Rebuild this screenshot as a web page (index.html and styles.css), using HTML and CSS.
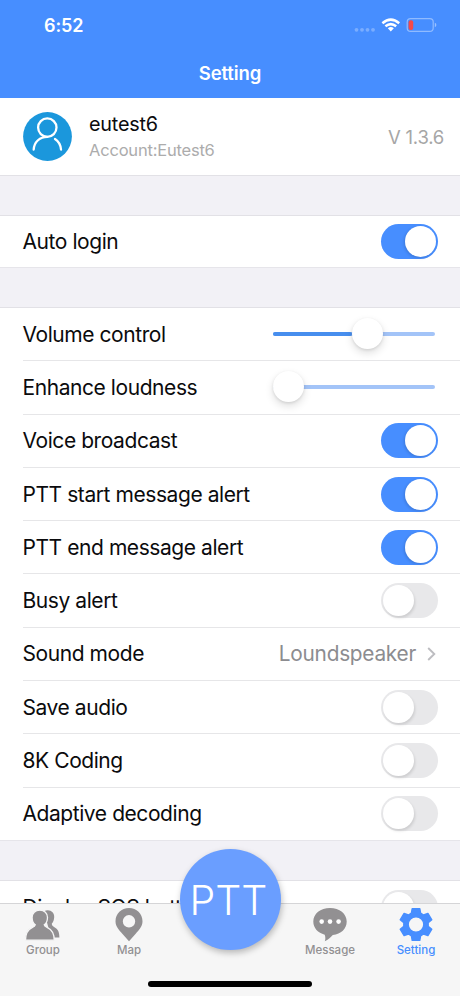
FILE: index.html
```html
<!DOCTYPE html>
<html lang="en">

<head>
  <meta charset="UTF-8">
  <meta name="viewport" content="width=device-width, initial-scale=1.0">
  <title>Setting</title>
  <link rel="stylesheet" href="styles.css">
</head>

<body>
  <div class="screen">
    <header class="header">
      <div class="status">
        <span class="time">6:52</span>
        <svg class="status-icons" width="84" height="18" viewBox="0 0 84 18">
          <g fill="#fff" opacity=".28">
            <circle cx="3.5" cy="13.8" r="1.9"/>
            <circle cx="9" cy="13.8" r="1.9"/>
            <circle cx="14.5" cy="13.8" r="1.9"/>
            <circle cx="20" cy="13.8" r="1.9"/>
          </g>
          <g fill="none" stroke="#fff" stroke-width="2.5">
            <path d="M29.4 7.2Q37.8 .1 46.2 7.2"/>
            <path d="M32.4 10.3Q37.8 5.9 43.2 10.3"/>
          </g>
          <path fill="#fff" d="M34.8 12.3Q37.8 9.9 40.8 12.3L37.8 15.6Z"/>
          <rect x="54.2" y="2.7" width="26" height="12.6" rx="3.4" fill="none" stroke="#fff" stroke-width="1.2" opacity=".4"/>
          <path fill="#fff" opacity=".45" d="M81.8 6.8Q83.4 7.4 83.4 9T81.8 11.2Z"/>
          <rect x="55.6" y="4.2" width="4.6" height="9.8" rx="2" fill="#f4494a"/>
        </svg>
      </div>
      <h1 class="title">Setting</h1>
    </header>

    <section class="profile">
      <svg class="avatar" width="49" height="49" viewBox="0 0 49 49">
        <circle cx="24.5" cy="24.5" r="24.4" fill="#1b97dc"/>
        <g fill="none" stroke="#fff" stroke-width="2.3" stroke-linecap="round">
          <circle cx="24.3" cy="15.6" r="9.2"/>
          <path d="M10.7 37.5C11.2 29.8 17 24.8 24.3 24.8"/>
          <path d="M32 27C35.5 29.3 37.6 33 38 37.5"/>
        </g>
      </svg>
      <div class="user">
        <div class="name">eutest6</div>
        <div class="account">Account:Eutest6</div>
      </div>
      <div class="version">V 1.3.6</div>
    </section>

    <section class="group login">
      <div class="row"><span class="label">Auto login</span><i class="switch on"></i></div>
    </section>

    <section class="group">
      <div class="row"><span class="label">Volume control</span><div class="slider"><i class="fill"></i><i class="knob"></i></div></div>
      <div class="row"><span class="label">Enhance loudness</span><div class="slider"><i class="knob"></i></div></div>
      <div class="row"><span class="label">Voice broadcast</span><i class="switch on"></i></div>
      <div class="row"><span class="label">PTT start message alert</span><i class="switch on"></i></div>
      <div class="row"><span class="label">PTT end message alert</span><i class="switch on"></i></div>
      <div class="row"><span class="label">Busy alert</span><i class="switch"></i></div>
      <div class="row">
        <span class="label">Sound mode</span>
        <span class="value">Loundspeaker</span>
        <svg class="chevron" width="9" height="14" viewBox="0 0 9 14"><path d="M1.2 1L7.3 7L1.2 13" fill="none" stroke="#bdbdc1" stroke-width="1.9"/></svg>
      </div>
      <div class="row"><span class="label">Save audio</span><i class="switch"></i></div>
      <div class="row"><span class="label">8K Coding</span><i class="switch"></i></div>
      <div class="row"><span class="label">Adaptive decoding</span><i class="switch"></i></div>
    </section>

    <section class="group">
      <div class="row"><span class="label">Display SOS button</span><i class="switch"></i></div>
    </section>

    <nav class="tabbar">
      <a class="tab">
        <svg width="36" height="36" viewBox="0 0 36 36" fill="#929092">
          <path d="M19 4.2C24.5 1.6 29.6 4.9 29.2 10.3C29 13.2 28.2 15.2 26.8 16.6C26.8 18.4 27.6 19.2 29.8 20.4C33 22.2 34.3 24.5 34.4 30.6H26Z"/>
          <path stroke="#f6f6f6" stroke-width="1.3" d="M14.8 3.2C10.3 3.2 7 6.3 7.1 10.7C7.2 13.8 8.4 16.4 10.3 17.8C10.2 19.2 9.1 19.8 7.1 20.6C2.6 22.6.6 26 .5 33.2H29.3C29.1 26 26.8 22.5 22.4 20.6C20.4 19.8 19.3 19.2 19.2 17.8C21.2 16.4 22.4 13.8 22.5 10.7C22.6 6.3 19.3 3.2 14.8 3.2Z"/>
        </svg>
        <span>Group</span>
      </a>
      <a class="tab">
        <svg width="36" height="36" viewBox="0 0 36 36"><path fill="#929092" fill-rule="evenodd" d="M18 1C10.4 1 4.5 6.8 4.5 14.2C4.5 19.5 8 22.8 11.3 26.7L18 34.3L24.7 26.7C28 22.8 31.5 19.5 31.5 14.2C31.5 6.8 25.6 1 18 1ZM18 8.1A6.2 6.2 0 1 1 18 20.5A6.2 6.2 0 1 1 18 8.1Z"/></svg>
        <span>Map</span>
      </a>
      <a class="tab tab-message">
        <svg width="36" height="36" viewBox="0 0 36 36">
          <path fill="#929092" d="M18 1C8.5 1 1.3 6.7 1.3 14.6C1.3 21.2 6 26 12.7 27.7C13.6 30 13.5 32.5 12.8 34.3C16.2 32.7 18.5 30.7 20.8 28.1C29 27.2 34.7 22 34.7 14.6C34.7 6.7 27.5 1 18 1Z"/>
          <g fill="#fff"><circle cx="9.7" cy="14.6" r="2.3"/><circle cx="18" cy="14.6" r="2.3"/><circle cx="26.6" cy="14.6" r="2.3"/></g>
        </svg>
        <span>Message</span>
      </a>
      <a class="tab active">
        <svg width="36" height="36" viewBox="0 0 36 36">
          <path fill="#478eff" stroke="#478eff" stroke-width="1.4" stroke-linejoin="round" fill-rule="evenodd" d="M14.2 1.7H21.8L22.6 6.2L25.6 8L29.9 6.4L33.8 12.8L30.2 15.6V19.4L33.8 22.2L29.9 28.6L25.6 27L22.6 28.8L21.8 33.3H14.2L13.4 28.8L10.4 27L6.1 28.6L2.2 22.2L5.8 19.4V15.6L2.2 12.8L6.1 6.4L10.4 8L13.4 6.2ZM18 9.7A7.8 7.8 0 1 0 18 25.3A7.8 7.8 0 1 0 18 9.7Z"/>
        </svg>
        <span>Setting</span>
      </a>
    </nav>
    <div class="ptt">PTT</div>
    <div class="home-bar"></div>
  </div>
</body>

</html>
```
FILE: styles.css
```css
* {
  box-sizing: border-box;
}

body {
  margin: 0;
  font-family: Inter, "Liberation Sans", sans-serif;
  color: #0b0b0d;
}

.screen {
  position: relative;
  width: 460px;
  height: 996px;
  overflow: hidden;
  background: #f2f1f6;
}

.header {
  height: 98px;
  background: #478eff;
  color: #fff;
}

.status {
  display: flex;
  justify-content: space-between;
  align-items: center;
  height: 51px;
  padding: 0 23px 0 44px;
}

.time {
  font-size: 18px;
  font-weight: 600;
  letter-spacing: -.1px;
}

.status-icons {
  margin-top: -1px;
}

.title {
  margin: 10px 0 0;
  font-size: 18.5px;
  line-height: 24px;
  font-weight: 600;
  letter-spacing: -.1px;
  text-align: center;
}

.profile {
  display: flex;
  align-items: center;
  height: 78px;
  padding: 0 16px 0 22.5px;
  background: #fff;
  border-bottom: 1px solid #e2e1e6;
}

.user {
  flex: 1;
  margin-left: 17.5px;
}

.name {
  font-size: 19.8px;
  line-height: 26px;
  letter-spacing: -.2px;
}

.account {
  font-size: 16.5px;
  line-height: 26px;
  letter-spacing: -.2px;
  color: #acacac;
}

.version {
  font-size: 18.5px;
  letter-spacing: -.25px;
  color: #a6a6a6;
}

.group {
  margin-top: 39px;
  background: #fff;
  border-top: 1px solid #e2e1e6;
  border-bottom: 1px solid #e6e5ea;
}

.row {
  display: flex;
  align-items: center;
  height: 53.3px;
  margin-left: 22.5px;
  padding-right: 22.5px;
  border-bottom: 1px solid #e6e6e8;
}

.row:last-child {
  height: 52.3px;
  border-bottom: none;
}

.login .row {
  height: 51px;
}

.label {
  flex: 1;
  font-size: 21px;
  letter-spacing: -.43px;
}

.switch {
  width: 57px;
  height: 35px;
  padding: 2px;
  border-radius: 18px;
  background: #e8e8ea;
}

.switch::before {
  content: "";
  display: block;
  width: 31px;
  height: 31px;
  border-radius: 50%;
  background: #fff;
  box-shadow: 1px 2px 3px rgba(0, 0, 0, .12);
}

.switch.on {
  background: #478eff;
}

.switch.on::before {
  margin-left: auto;
  box-shadow: -1px 1px 3px rgba(0, 0, 0, .15);
}

.slider {
  display: flex;
  align-items: center;
  width: 162px;
  height: 4px;
  margin-right: 2.5px;
  border-radius: 2px;
  background: #a3c4f8;
}

.fill {
  width: 79px;
  height: 4px;
  border-radius: 2px;
  background: #478eee;
}

.knob {
  width: 31px;
  height: 31px;
  margin-top: -1px;
  border-radius: 50%;
  background: #fff;
  box-shadow: 0 4px 9px rgba(0, 0, 0, .13), 0 1px 3px rgba(0, 0, 0, .1);
}

.value {
  font-size: 20.8px;
  letter-spacing: -.25px;
  color: #8c8c90;
}

.chevron {
  margin: 0 1.5px 0 11px;
}

.tabbar {
  position: absolute;
  left: 0;
  bottom: 0;
  display: flex;
  justify-content: space-between;
  width: 460px;
  height: 93px;
  padding: 3px 1px 0 0;
  background: #f6f6f6;
  border-top: 1px solid #d5d5d7;
}

.tab {
  display: flex;
  flex-direction: column;
  align-items: center;
  width: 86px;
  font-size: 11.5px;
  line-height: 14px;
  font-weight: 500;
  color: #929092;
}

.tab-message {
  margin-left: 115px;
}

.active {
  color: #478eff;
}

.ptt {
  position: absolute;
  left: 180px;
  top: 849px;
  width: 101px;
  height: 101px;
  padding-right: 4px;
  border-radius: 50%;
  background: #6a9eff;
  box-shadow: 1px 3px 6px rgba(0, 0, 0, .25);
  color: #fff;
  font-size: 41px;
  font-weight: 300;
  line-height: 103px;
  text-align: center;
}

.home-bar {
  position: absolute;
  left: 148px;
  bottom: 9px;
  width: 164px;
  height: 6px;
  border-radius: 3px;
  background: #000;
}
```
